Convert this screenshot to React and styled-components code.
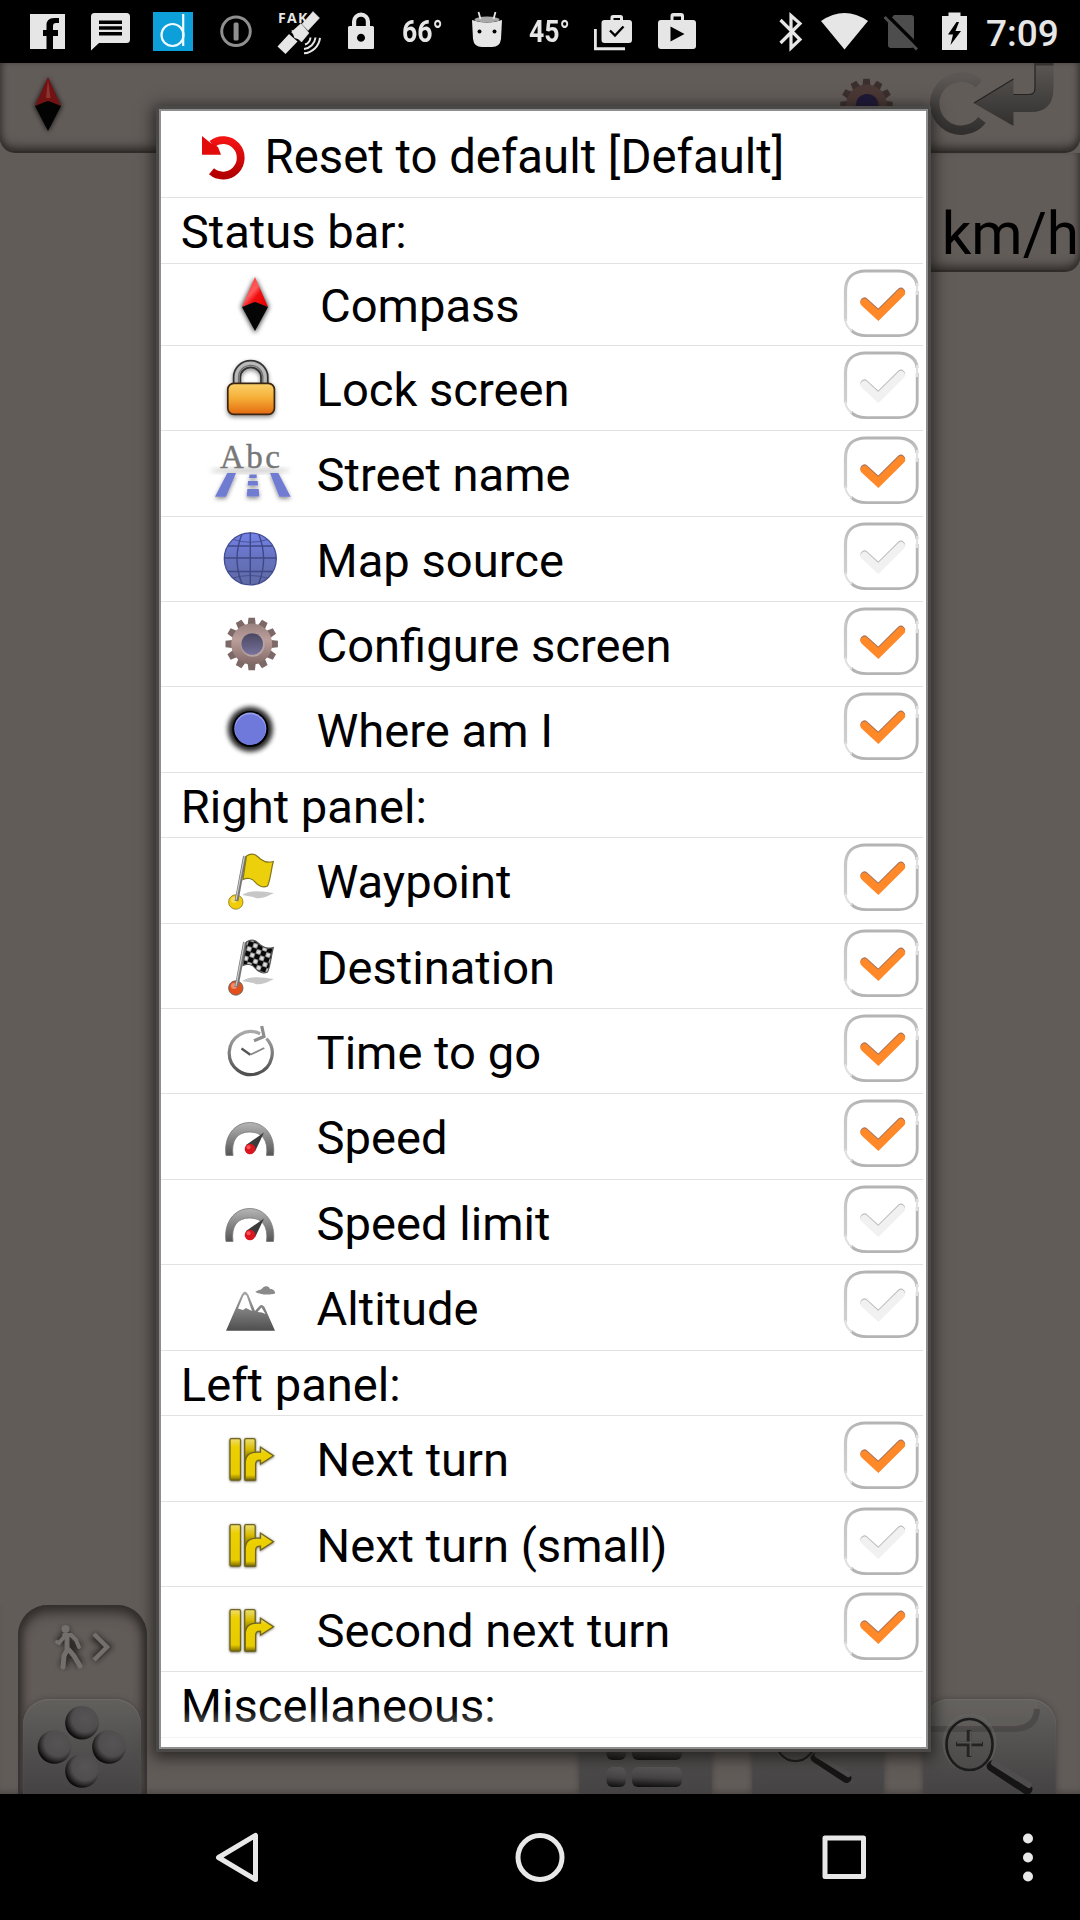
import React from 'react';
import styled, { createGlobalStyle } from 'styled-components';

const GlobalStyle = createGlobalStyle`
  * { box-sizing: border-box; }
  body { margin: 0; background: #000; font-family: Roboto, "Noto Sans", sans-serif; color: #000; }
  svg { display: block; flex: none; }
`;

const Phone = styled.div`
  width: 1080px;
  height: 1920px;
  display: flex;
  flex-direction: column;
  overflow: hidden;
  background: #000;
`;

const StatusBar = styled.header`
  height: 63px;
  flex: none;
  display: flex;
  background: #000;
  color: #e6e6e6;
`;

const Slot = styled.div`
  width: ${(p) => p.$w}px;
  margin-left: ${(p) => p.$gap}px;
  flex: none;
`;

const Temp = styled(Slot)`
  font-size: 32px;
  font-weight: 700;
  line-height: 63px;
  transform: scaleX(0.83);
  transform-origin: left;
`;

const Clock = styled(Slot)`
  font-size: 37px;
  font-weight: 500;
  line-height: 67px;
`;

const Screen = styled.main`
  position: relative;
  height: 1731px;
  flex: none;
  display: flex;
  flex-direction: column;
  background: #625c59;
  overflow: hidden;
`;

const MapBar = styled.div`
  height: 90px;
  flex: none;
  display: flex;
  align-items: flex-start;
  border-radius: 0 0 15px 15px;
  border-bottom: 2px solid #2f2c2a;
  box-shadow: inset 0 -9px 11px -6px #2b2826, inset 5px 0 6px -3px #3b3735, inset -5px 0 6px -3px #3b3735;
`;

const SpeedPanel = styled.div`
  width: 300px;
  height: 119px;
  flex: none;
  align-self: flex-end;
  display: flex;
  justify-content: flex-end;
  padding: 46px 1px 0 0;
  font-size: 58.5px;
  line-height: 70px;
  border-radius: 0 0 15px 0;
  border-bottom: 2px solid #2f2c2a;
  box-shadow: inset 0 -9px 11px -6px #2b2826, inset -5px 0 6px -3px #3b3735;
`;

const BottomControls = styled.div`
  margin-top: auto;
  height: 189px;
  flex: none;
  display: flex;
  align-items: flex-end;
  padding-left: 18px;
  box-shadow: inset 0 -6px 6px -4px #4a4643;
`;

const ModePanel = styled.div`
  width: 129px;
  height: 189px;
  display: flex;
  flex-direction: column;
  justify-content: space-between;
  border-radius: 30px 30px 0 0;
  padding: 0 6px 0 5px;
  box-shadow: inset 0 9px 14px -2px #302d2b, inset 6px 0 8px -2px #353230, inset -6px 0 8px -2px #353230;
`;

const Key = styled.div`
  width: ${(p) => p.$w}px;
  height: 95px;
  margin-left: ${(p) => p.$gap || 0}px;
  flex: none;
  border-radius: 26px 26px 0 0;
  background: linear-gradient(#62605d, #4b4949 75%, #444242);
  box-shadow: inset 0 1px 1px #6e6b68, 0 0 5px 1px #3b383688;
  overflow: hidden;
`;

const Dialog = styled.section`
  position: absolute;
  left: 159px;
  top: 46px;
  width: 769px;
  height: 1640px;
  border: 2px solid #8e8e8e;
  background: #fff;
  box-shadow: 0 0 0 3px #4a4948, 0 3px 14px 6px rgba(20, 18, 16, 0.7);
  overflow: hidden;
  font-size: 47.15px;
  white-space: nowrap;

  &::after {
    content: '';
    position: absolute;
    left: 0;
    right: 0;
    bottom: 0;
    height: 38px;
    background: linear-gradient(#ffffff00, #ffffffd0);
  }
`;

const List = styled.div`
  padding-right: 3px;
  display: flex;
  flex-direction: column;
`;

const Line = styled.div`
  display: flex;
  flex: none;
  border-bottom: 1px solid #e2e2e2;
`;

const ResetRow = styled(Line)`
  height: 87.4px;
  padding-left: 30px;
  line-height: 93px;
  font-size: 47.3px;
`;

const ResetLabel = styled.span`
  margin-left: 9.5px;
`;

const Heading = styled(Line)`
  height: 65.3px;
  padding-left: 19.8px;
  line-height: 69px;
`;

const ItemRow = styled(Line)`
  height: ${(p) => (p.$short ? 82 : 85.45)}px;
  padding-left: 45px;
  line-height: ${(p) => (p.$short ? 85 : 89)}px;
`;

const Label = styled.span`
  flex: 1;
  padding-left: ${(p) => (p.$short ? 24 : 20.5)}px;
`;

const Check = styled.div`
  flex: none;
  padding: 4px 4.5px 0 0;
`;

const NavBar = styled.footer`
  flex: 1;
  display: flex;
  align-items: center;
  background: #000;
`;

/* ---------- list icons ---------- */

const Ico = ({ children }) => (
  <svg width="90" height="84" viewBox="0 0 90 84" fill="none">{children}</svg>
);

const Defs = () => (
  <svg width="0" height="0" style={{ position: 'absolute' }}>
    <defs>
      <filter id="soft" x="-40%" y="-40%" width="180%" height="180%"><feGaussianBlur stdDeviation="2.5" /></filter>
      <filter id="drop" x="-40%" y="-40%" width="180%" height="180%"><feDropShadow dx="0" dy="2" stdDeviation="2" floodColor="#000" floodOpacity="0.45" /></filter>
      <filter id="turnShadow" x="-20%" y="-20%" width="140%" height="140%"><feDropShadow dx="0" dy="0.5" stdDeviation="0.9" floodColor="#2a2400" floodOpacity="0.7" /></filter>
      <linearGradient id="red" x1="0" y1="0" x2="0" y2="1"><stop offset="0" stopColor="#f21313" /><stop offset="1" stopColor="#b40000" /></linearGradient>
      <linearGradient id="needle" x1="0" y1="0" x2="1" y2="1"><stop offset="0" stopColor="#ff2a2a" /><stop offset="0.45" stopColor="#ff5a5a" /><stop offset="0.6" stopColor="#f01010" /><stop offset="1" stopColor="#e00000" /></linearGradient>
      <linearGradient id="gold" x1="0" y1="0" x2="0" y2="1"><stop offset="0" stopColor="#fbd36a" /><stop offset="0.5" stopColor="#f5ab35" /><stop offset="1" stopColor="#e46a12" /></linearGradient>
      <linearGradient id="steel" x1="0" y1="0" x2="0" y2="1"><stop offset="0" stopColor="#b5b5b5" /><stop offset="1" stopColor="#555" /></linearGradient>
      <linearGradient id="globe" x1="0" y1="0" x2="0" y2="1"><stop offset="0" stopColor="#7482ea" /><stop offset="0.5" stopColor="#6672bd" /><stop offset="1" stopColor="#5f6aa5" /></linearGradient>
      <linearGradient id="gear" x1="0" y1="0" x2="0" y2="1"><stop offset="0" stopColor="#9a8280" /><stop offset="0.4" stopColor="#bb9e9a" /><stop offset="1" stopColor="#806866" /></linearGradient>
      <linearGradient id="hub" x1="0" y1="0" x2="0" y2="1"><stop offset="0" stopColor="#4a4660" /><stop offset="1" stopColor="#76729c" /></linearGradient>
      <linearGradient id="yellow" x1="0" y1="0" x2="0" y2="1"><stop offset="0" stopColor="#f0dc70" /><stop offset="0.2" stopColor="#ecd000" /><stop offset="0.85" stopColor="#e8cb00" /><stop offset="1" stopColor="#7a6a00" /></linearGradient>
      <linearGradient id="lane" x1="0" y1="0" x2="0" y2="1"><stop offset="0" stopColor="#ece070" /><stop offset="0.25" stopColor="#d8bc00" /><stop offset="0.5" stopColor="#7c6c00" /></linearGradient>
      <linearGradient id="box" x1="0" y1="0" x2="0" y2="1"><stop offset="0" stopColor="#b4b4b4" /><stop offset="0.3" stopColor="#c6c6c6" /><stop offset="1" stopColor="#d0d0d0" /></linearGradient>
      <linearGradient id="dimSteel" x1="0" y1="0" x2="0" y2="1"><stop offset="0" stopColor="#5a5754" /><stop offset="1" stopColor="#32302f" /></linearGradient>
      <linearGradient id="mount" x1="0" y1="0" x2="0" y2="1"><stop offset="0" stopColor="#aaa" /><stop offset="1" stopColor="#4e4e4e" /></linearGradient>
      <radialGradient id="knob" cx="0.6" cy="0.38" r="0.64"><stop offset="0" stopColor="#565454" /><stop offset="0.62" stopColor="#4f4d4d" /><stop offset="0.78" stopColor="#353333" /><stop offset="1" stopColor="#080707" /></radialGradient>
      <linearGradient id="bar" x1="0.1" y1="0" x2="0" y2="1"><stop offset="0" stopColor="#595757" /><stop offset="0.5" stopColor="#454343" /><stop offset="1" stopColor="#0c0b0b" /></linearGradient>
      <pattern id="checks" width="10" height="10" patternUnits="userSpaceOnUse" patternTransform="translate(43 17) rotate(18)"><rect width="10" height="10" fill="#080808" /><rect x="5.3" y="0.3" width="4.4" height="4.4" fill="#ddd" /><rect x="0.3" y="5.3" width="4.4" height="4.4" fill="#ddd" /></pattern>
    </defs>
  </svg>
);

const CompassIcon = () => (
  <Ico>
    <path d="M49 14L63 43 49 69 35 43Z" fill="#000" opacity="0.75" filter="url(#soft)" />
    <path d="M49 13L62 43 49 38 36 43Z" fill="url(#needle)" />
    <path d="M49 38L62 43 49 67 36 43Z" fill="#050505" />
  </Ico>
);

const LockIcon = () => (
  <Ico>
    <g filter="url(#drop)">
      <path d="M31 41V31a13.7 13 0 0 1 27.4 0v10" stroke="#333" strokeWidth="8.5" />
      <path d="M31 41V31a13.7 13 0 0 1 27.4 0v10" stroke="#b9b9b9" strokeWidth="5" />
      <path d="M32.6 41V31a12 11.5 0 0 1 24.2 0v10" stroke="#707070" strokeWidth="1.4" />
      <rect x="21.8" y="37.3" width="46.6" height="31" rx="6" fill="url(#gold)" stroke="#3a2812" strokeWidth="1.7" />
    </g>
  </Ico>
);

const StreetWord = styled.text`
  font-family: "Liberation Serif", serif;
  font-size: 33px;
  letter-spacing: 2.4px;
`;

const StreetIcon = () => (
  <Ico>
    <ellipse cx="44" cy="39.5" rx="40" ry="2.5" fill="#777" opacity="0.4" filter="url(#soft)" />
    <StreetWord x="14" y="36.5" fill="#777" stroke="#777" strokeWidth="0.4">Abc</StreetWord>
    <g fill="#707bd2" filter="url(#drop)">
      <path d="M21.3 42H30L20 65.7H9ZM64 42h8.3L84.7 65.7H73.3ZM43.5 43.5h7.2V47h-7.6ZM42 50h9.7l.4 4.6H41.6ZM41.3 58h11.4l.6 7.6H40.8Z" />
    </g>
  </Ico>
);

const GlobeIcon = () => (
  <Ico>
    <circle cx="44.3" cy="41.8" r="26" fill="url(#globe)" stroke="#434c91" strokeWidth="1.3" />
    <g stroke="#3f4886" strokeWidth="1.4">
      <path d="M44.3 15.5v52M18.3 41h52M22 29h44.6M22 54.5h44.6" />
      <path d="M36 17Q26 41.5 36 67M52.6 17Q62.6 41.5 52.6 67" />
      <path d="M27 22.5Q44 28 61.6 22.5M27 61Q44 56 61.6 61" strokeWidth="0.8" />
    </g>
  </Ico>
);

const gearTeeth = Array.from({ length: 12 }, (_, i) => i * 30);

const GearShape = ({ cx, cy, dim }) => (
  <g>
    <g fill={dim ? '#3a2f2d' : '#7c6866'}>
      {gearTeeth.map((a) => (
        <path key={a} d={`M${cx - 4.3} ${cy - 17}L${cx - 3.2} ${cy - 26.2}H${cx + 3.2}L${cx + 4.3} ${cy - 17}Z`} transform={`rotate(${a} ${cx} ${cy})`} />
      ))}
    </g>
    <circle cx={cx} cy={cy} r="20.5" fill={dim ? '#4a3836' : 'url(#gear)'} />
    <circle cx={cx + 1} cy={cy + 0.8} r="12" fill={dim ? '#3a2c2c' : '#b7a4a2'} />
    <circle cx={cx + 0.5} cy={cy} r="10.8" fill={dim ? '#1d1938' : 'url(#hub)'} />
  </g>
);

const GearIcon = () => <Ico><GearShape cx={45.7} cy={42} /></Ico>;

const WhereIcon = () => (
  <Ico>
    <circle cx="44.3" cy="42.2" r="22.5" fill="#000" opacity="0.85" filter="url(#soft)" />
    <circle cx="44.3" cy="42" r="18" fill="#000" />
    <circle cx="44.3" cy="41.6" r="16" fill="#98a0ee" />
    <circle cx="44.3" cy="42.6" r="15.3" fill="#6f79dc" />
  </Ico>
);

const Flag = ({ fill, ball, edge }) => (
  <Ico>
    <path d="M36 57C46 51 58 54 68 55C60 59 54 62 47 59Z" fill="#000" opacity="0.22" />
    <circle cx="29.8" cy="64" r="7.2" fill={ball} stroke={edge} strokeWidth="0.8" />
    <circle cx="28" cy="62" r="3" fill="#fff" opacity="0.35" />
    <path d="M39 18L30.5 63" stroke="#777" strokeWidth="3.8" />
    <path d="M38.5 18L30 62" stroke="#ccc" strokeWidth="1.2" />
    <path d="M40.5 18C44 15.5 48 15.5 51.5 18.5C57 24 61 25 67.3 23.5C65 32 64.5 42 61.5 48C57 50 52 48 49 44C46 40 41 39.5 37 41.5Z" fill={fill} stroke={edge} strokeWidth="1.2" />
  </Ico>
);

const WaypointIcon = () => <Flag fill="#ecd00c" ball="#f0cd08" edge="#857619" />;
const DestinationIcon = () => <Flag fill="url(#checks)" ball="#e4501c" edge="#555" />;

const TimeIcon = () => (
  <Ico>
    <path d="M60.5 29.500A21.5 21.5 0 1 1 54 24.7" stroke="url(#mount)" strokeWidth="3.2" />
    <path d="M55.7 17L58 27.5 48 31.8" stroke="#8d8d8d" strokeWidth="3.2" />
    <path d="M35.5 39.6L44.3 45.7" stroke="#555" strokeWidth="2.4" />
    <path d="M44.3 45.7L58.3 39" stroke="#888" strokeWidth="1.8" />
  </Ico>
);

const SpeedIcon = () => (
  <Ico>
    <path d="M20 61.5C17.5 43 28 28.5 43.7 28.5S70 43 67.4 61.5H60.5C62.5 46 56 38 43.7 38S25 46 27 61.5Z" fill="url(#steel)" stroke="#777" strokeWidth="0.8" />
    <path d="M58 38.5L49 57.5 40 51Z" fill="#3b3b3b" />
    <circle cx="44" cy="55" r="5.3" fill="#dc1420" />
    <circle cx="42.5" cy="53.3" r="2" fill="#ff7070" opacity="0.7" />
  </Ico>
);

const AltitudeIcon = () => (
  <Ico>
    <path d="M20 65.8L35.5 30Q39 23 42.5 30L49 46 53 41.5Q55.7 38.5 58.5 42L69 65.8Z" fill="url(#mount)" />
    <path d="M32 43.5L37.3 31Q39 28 40.8 31L46 46 40 43 37 45Z" fill="#fff" />
    <path d="M51.5 47L55.5 42.5 59.5 49 56 47.5Z" fill="#fff" />
    <path d="M49.3 27C52 24.5 55 25.5 56.5 23C59 20 63.5 21 64 24C67 24 69.5 26 69 28.5C63 30.5 53 29.5 49.3 27Z" fill="#8a8a8a" />
  </Ico>
);

const TurnIcon = () => (
  <Ico>
    <g strokeWidth="1.3" stroke="#6f6520" filter="url(#turnShadow)">
      <rect x="24" y="22.7" width="10.5" height="41.5" rx="1.5" fill="url(#yellow)" />
      <rect x="38.7" y="22.7" width="10.5" height="41.5" rx="1.5" fill="url(#lane)" />
      <path d="M39.2 64V48C39.2 40 43.5 36.2 50.5 36.2H54.5V31.3L67.5 39.7 54.5 48V44.2C50.5 44.2 49.6 45 49.6 49.5V64Z" fill="url(#yellow)" />
    </g>
  </Ico>
);

const ResetIcon = () => (
  <svg width="64" height="84" viewBox="0 0 64 84" fill="none">
    <path d="M20.5 60.3A17.7 17.7 0 1 0 21 33" stroke="url(#red)" strokeWidth="7.8" />
    <path d="M11 25L19 31.5 27 36 30 43.7H11Z" fill="#e30a0a" />
  </svg>
);

const CheckBox = ({ on }) => (
  <Check>
    <svg width="76" height="70" viewBox="-1 -1 76 70" fill="none">
      <path d="M1.5 52V22C1.5 9 9 2 22 2H54C65 2 72.8 8 73 17" stroke="url(#box)" strokeWidth="3.2" />
      <path d="M73.2 22V50C73.2 60 66 66.6 55 66.6H22C15 66.6 10 64.5 7 61" stroke="#b4b4b4" strokeWidth="2.8" />
      <path d="M73 14V26M1.3 50C1.3 55 3 58.5 8 62" stroke="#e0e0e0" strokeWidth="2" />
      <path d="M20.5 32.5L34.3 45 57 22.7" stroke={on ? '#a8745a' : '#bdbdbd'} strokeWidth="8" strokeLinecap="round" />
      <path d="M20.5 33.7L34.3 46.4 57 24" stroke={on ? '#ff8829' : '#f1f1f1'} strokeWidth="8" strokeLinecap="round" />
    </svg>
  </Check>
);

const groups = [
  { title: 'Status bar:', items: [
    ['Compass', CompassIcon, true, true],
    ['Lock screen', LockIcon, false],
    ['Street name', StreetIcon, true],
    ['Map source', GlobeIcon, false],
    ['Configure screen', GearIcon, true],
    ['Where am I', WhereIcon, true],
  ] },
  { title: 'Right panel:', items: [
    ['Waypoint', WaypointIcon, true],
    ['Destination', DestinationIcon, true],
    ['Time to go', TimeIcon, true],
    ['Speed', SpeedIcon, true],
    ['Speed limit', SpeedIcon, false],
    ['Altitude', AltitudeIcon, false],
  ] },
  { title: 'Left panel:', items: [
    ['Next turn', TurnIcon, true],
    ['Next turn (small)', TurnIcon, false],
    ['Second next turn', TurnIcon, true],
  ] },
  { title: 'Miscellaneous:', items: [] },
];

/* ---------- status bar icons ---------- */

const Sym = ({ w, gap, children }) => (
  <Slot $w={w} $gap={gap}>
    <svg width={w} height="63" viewBox={`0 0 ${w} 63`} fill="#e6e6e6">{children}</svg>
  </Slot>
);

const FakeText = styled.text`
  font-family: "Open Sans", sans-serif;
  font-size: 14px;
  font-weight: 700;
  letter-spacing: 1.3px;
`;

const TopStatus = () => (
  <StatusBar>
    <Sym w={35} gap={30}>
      <path d="M0 14h35v35H23V36h5v-6h-5v-4c0-2 1-3 3-3h3v-5h-5c-5 0-7.5 3-7.5 7v5H13v6h3.5v13H0Z" />
    </Sym>
    <Sym w={39} gap={26}>
      <path fillRule="evenodd" d="M3.5 13h32a3.5 3.5 0 0 1 3.5 3.5v23a3.5 3.5 0 0 1-3.5 3.5H8L0 50.5V16.500A3.5 3.5 0 0 1 3.5 13ZM8 20.5V24h23v-3.5ZM8 26.3v3.5h23v-3.5ZM8 32v3.5h23V32Z" />
    </Sym>
    <Sym w={40} gap={23}>
      <rect y="12" width="40" height="39" fill="#0d9fda" />
      <g fill="none" stroke="#f0fbff" strokeWidth="2.2"><circle cx="19.5" cy="35" r="11" /><path d="M30.2 14V46" /></g>
    </Sym>
    <Sym w={32} gap={27}>
      <circle cx="16" cy="31.3" r="14.3" fill="none" stroke="#8f8f8f" strokeWidth="3" />
      <rect x="13.6" y="22.5" width="5" height="18" rx="1.5" fill="#8f8f8f" />
    </Sym>
    <Sym w={46} gap={25}>
      <FakeText x="1" y="22.5">FAK</FakeText>
      <path d="M36 11.5l6.5 6.5-11.5 12.5-6-6.5ZM24 23.5l8 9.5-7.5 9-10-10Z" stroke="#e6e6e6" strokeWidth="0.5" />
      <path d="M0.5 46.5L12 34 20.5 41.5 8.5 54ZM14.5 30l9 2.5 2 8-8-2.5Z" />
      <path d="M28 44.5a8 8 0 0 0 5.5-7M27 49a13 13 0 0 0 11.5-11.5M27 53.3a17.5 17.5 0 0 0 16-15.5" fill="none" stroke="#e6e6e6" strokeWidth="2" />
    </Sym>
    <Sym w={26} gap={25}>
      <path fillRule="evenodd" d="M4 26v-4.5a9 9 0 0 1 18 0V26h2.5a1.5 1.5 0 0 1 1.5 1.5V48a1 1 0 0 1-1 1H1a1 1 0 0 1-1-1V27.500A1.5 1.5 0 0 1 1.5 26ZM8.2 26h9.6v-4.5a4.8 4.8 0 0 0-9.6 0ZM13 33.7a4 4 0 1 0 .01 0Z" />
    </Sym>
    <Temp $w={50} $gap={28}>66°</Temp>
    <Sym w={30} gap={20}>
      <path d="M0 20Q15 25 30 20L29 39Q28 47 20 47H10Q2 47 1 39Z" />
      <ellipse cx="15" cy="19.5" rx="12.5" ry="3" fill="#a8a8a8" />
      <path d="M8.5 19L6.5 12M21.5 19l2-7" stroke="#e6e6e6" strokeWidth="1.8" />
      <circle cx="7.5" cy="31.5" r="2" fill="#000" /><circle cx="22.5" cy="31.5" r="2" fill="#000" />
    </Sym>
    <Temp $w={50} $gap={27}>45°</Temp>
    <Sym w={38} gap={15}>
      <path fillRule="evenodd" d="M10.5 20h6V17.500A2.5 2.5 0 0 1 19 15h7.5a2.5 2.5 0 0 1 2.5 2.5V20h6a3 3 0 0 1 3 3v17a3 3 0 0 1-3 3H10.5a3 3 0 0 1-3-3V23a3 3 0 0 1 3-3ZM19.5 18v2H26v-2Z" />
      <path d="M1.3 29V48.7H31" fill="none" stroke="#e6e6e6" strokeWidth="3" />
      <path d="M16 30.5l5 5 8.5-9" fill="none" stroke="#000" strokeWidth="2.4" />
    </Sym>
    <Sym w={38} gap={26}>
      <path fillRule="evenodd" d="M3 20h9.5v-4a3 3 0 0 1 3-3H23a3 3 0 0 1 3 3v4h9a3 3 0 0 1 3 3v23a3 3 0 0 1-3 3H3a3 3 0 0 1-3-3V23a3 3 0 0 1 3-3ZM15.5 16.5V20H23v-3.5ZM12.5 26.5v15L26.5 34Z" />
    </Sym>
    <Sym w={24} gap={83}>
      <path d="M1.5 20L21 39.5 12 48V15.5L21 23.5 1.5 43" fill="none" stroke="#e6e6e6" strokeWidth="3.2" />
    </Sym>
    <Sym w={47} gap={18}><path d="M0 21Q23.500 5 47 21L23.5 49.5Z" /></Sym>
    <Sym w={35} gap={16}>
      <path d="M10 15h17a3 3 0 0 1 3 3v27a3 3 0 0 1-3 3H7a3 3 0 0 1-3-3V22Z" fill="#4d4d4d" />
      <path d="M3 15L35 47" stroke="#000" strokeWidth="3.5" /><path d="M0.5 17L33 49.5" stroke="#4d4d4d" strokeWidth="3" />
    </Sym>
    <Sym w={25} gap={23}>
      <path fillRule="evenodd" d="M6.5 16v-3.5h12V16H25v34H0V16ZM14.5 22L6 34.5h5L8.5 45 19 31h-5.5l3.5-9Z" />
    </Sym>
    <Clock $w={80} $gap={19}>7:09</Clock>
  </StatusBar>
);

/* ---------- dimmed map screen ---------- */

const GearSlot = styled.div`margin-left: 769px;`;
const ReturnSlot = styled.div`margin-left: 29px;`;

const TopBar = () => (
  <MapBar>
    <svg width="70" height="88" viewBox="0 63 70 88">
      <path d="M48 78L62 106 48 132 34 106Z" fill="#000" opacity="0.7" filter="url(#soft)" />
      <path d="M48 77L61 106 48 101 35 106Z" fill="#731212" /><path d="M48 80L50.5 98 46 98Z" fill="#a55a55" opacity="0.5" />
      <path d="M48 101L61 106 48 131 35 106Z" fill="#030303" />
    </svg>
    <GearSlot><svg width="56" height="88" viewBox="839 63 56 88"><GearShape cx={866.5} cy={105} dim /></svg></GearSlot>
    <ReturnSlot>
      <svg width="150" height="88" viewBox="925 63 150 88" fill="none">
        <path d="M980 84A26.5 26.5 0 1 0 983 120" stroke="url(#dimSteel)" strokeWidth="9.5" />
        <path d="M974.5 103L1014.5 79V94.5H1030Q1036 94.5 1036 88V63H1054.5V88Q1054.5 112 1032 112H1014.5V126Z" fill="url(#dimSteel)" />
        <path d="M975 103L1014.5 79M1014.5 94.5H1030Q1036 94.5 1036 88V63" stroke="#252322" strokeWidth="1.2" />
        <path d="M1036 64H1054.5" stroke="#353230" strokeWidth="3" />
      </svg>
    </ReturnSlot>
  </MapBar>
);

const Magnifier = ({ x = 0, y = 0, s = 1, plus }) => (
  <g transform={`translate(${x} ${y}) scale(${s})`} fill="none">
    <path d="M69 67L104 90" stroke="#161515" strokeWidth="11" strokeLinecap="round" />
    <path d="M71 64L106 86" stroke="#4f4d4d" strokeWidth="6" strokeLinecap="round" />
    <ellipse cx="46.5" cy="43.5" rx="26" ry="28" stroke="#6a6765" strokeWidth="2" opacity="0.5" />
    <ellipse cx="46.5" cy="45.5" rx="23" ry="25.5" stroke="#1c1b1b" strokeWidth="2.6" />
    {plus && <g><path d="M33 45H60M46 31V58" stroke="#242323" strokeWidth="4.5" /><path d="M34 43.5H59M47.5 32V57" stroke="#555" strokeWidth="1.8" /></g>}
  </g>
);

const knobs = [[82, 1722.7], [54.5, 1747], [109, 1747], [82, 1771]];

const Bottom = () => (
  <BottomControls>
    <ModePanel>
      <svg width="118" height="90" viewBox="23 1605 118 90" fill="none">
        <g stroke="#1c1a19" strokeWidth="8" opacity="0.75" filter="url(#soft)"><path d="M65 1628L69 1650 63 1667M58 1642L66 1636 80 1648M70 1648L80 1665M93 1636L107 1647 94 1659" /></g>
        <circle cx="65.5" cy="1629" r="4" fill="#726f6c" />
        <path d="M64 1635L71 1635 76 1640 79 1647M64 1637L59 1643 57 1642" stroke="#726f6c" strokeWidth="4" strokeLinecap="round" />
        <path d="M67 1637V1650M67 1650L64 1656 63 1667M69 1650L74 1656 80 1666" stroke="#726f6c" strokeWidth="5" strokeLinecap="round" />
        <path d="M94 1634L107 1647 94 1660" stroke="#726f6c" strokeWidth="4.5" />
      </svg>
      <Key $w={118}>
        <svg width="118" height="95" viewBox="23 1699 118 95">
          {knobs.map(([x, y]) => (
            <circle key={`${x}-${y}`} cx={x} cy={y} r="16.8" fill="url(#knob)" />
          ))}
        </svg>
      </Key>
    </ModePanel>
    <Key $w={133} $gap={432}>
      <svg width="133" height="95" viewBox="579 1699 133 95" fill="url(#bar)">
        {[1713, 1740, 1767].map((y) => (
          <g key={y}><rect x="606.5" y={y} width="19.5" height="20" rx="6" /><rect x="632" y={y} width="50" height="20" rx="6" /></g>
        ))}
      </svg>
    </Key>
    <Key $w={132} $gap={40}><svg width="132" height="95" viewBox="0 0 132 95"><Magnifier x={2} y={-1} s={0.89} /></svg></Key>
    <Key $w={133} $gap={39}>
      <svg width="133" height="95" viewBox="0 0 133 95">
        <path d="M0 0H116Q112 30 90 29H0Z" fill="#716e6b" opacity="0.2" />
        <path d="M0 30H92Q113 29 114 10" fill="none" stroke="#484645" strokeWidth="6" opacity="0.8" />
        <Magnifier plus />
      </svg>
    </Key>
  </BottomControls>
);

const BackKey = styled.div`margin-left: 214px;`;
const HomeKey = styled.div`margin-left: 253px;`;
const RecentKey = styled.div`margin-left: 255px;`;
const MenuKey = styled.div`margin-left: 153px;`;

const Navigation = () => (
  <NavBar>
    <BackKey><svg width="48" height="54" viewBox="0 0 48 54" fill="none" stroke="#e8e8e8" strokeWidth="5" strokeLinejoin="round"><path d="M4.5 27.5L41.5 5.5V49.5Z" /></svg></BackKey>
    <HomeKey><svg width="50" height="50" viewBox="0 0 50 50" fill="none" stroke="#e8e8e8" strokeWidth="5"><circle cx="25" cy="25.5" r="22" /></svg></HomeKey>
    <RecentKey><svg width="50" height="50" viewBox="0 0 50 50" fill="none" stroke="#e8e8e8" strokeWidth="5" strokeLinejoin="round"><rect x="5" y="6" width="38.5" height="38.5" /></svg></RecentKey>
    <MenuKey><svg width="12" height="50" viewBox="-1 0 12 50" fill="#e8e8e8"><circle cx="4" cy="6.5" r="5" /><circle cx="4" cy="25.5" r="5" /><circle cx="4" cy="44.5" r="5" /></svg></MenuKey>
  </NavBar>
);

export default function App() {
  return (
    <Phone>
      <GlobalStyle />
      <Defs />
      <TopStatus />
      <Screen>
        <TopBar />
        <SpeedPanel>km/h</SpeedPanel>
        <Bottom />
        <Dialog>
          <List>
            <ResetRow><ResetIcon /><ResetLabel>Reset to default [Default]</ResetLabel></ResetRow>
            {groups.map((g) => (
              <React.Fragment key={g.title}>
                <Heading>{g.title}</Heading>
                {g.items.map(([name, Icon, on, short]) => (
                  <ItemRow key={name} $short={short}>
                    <Icon />
                    <Label $short={short}>{name}</Label>
                    <CheckBox on={on} />
                  </ItemRow>
                ))}
              </React.Fragment>
            ))}
          </List>
        </Dialog>
      </Screen>
      <Navigation />
    </Phone>
  );
}
